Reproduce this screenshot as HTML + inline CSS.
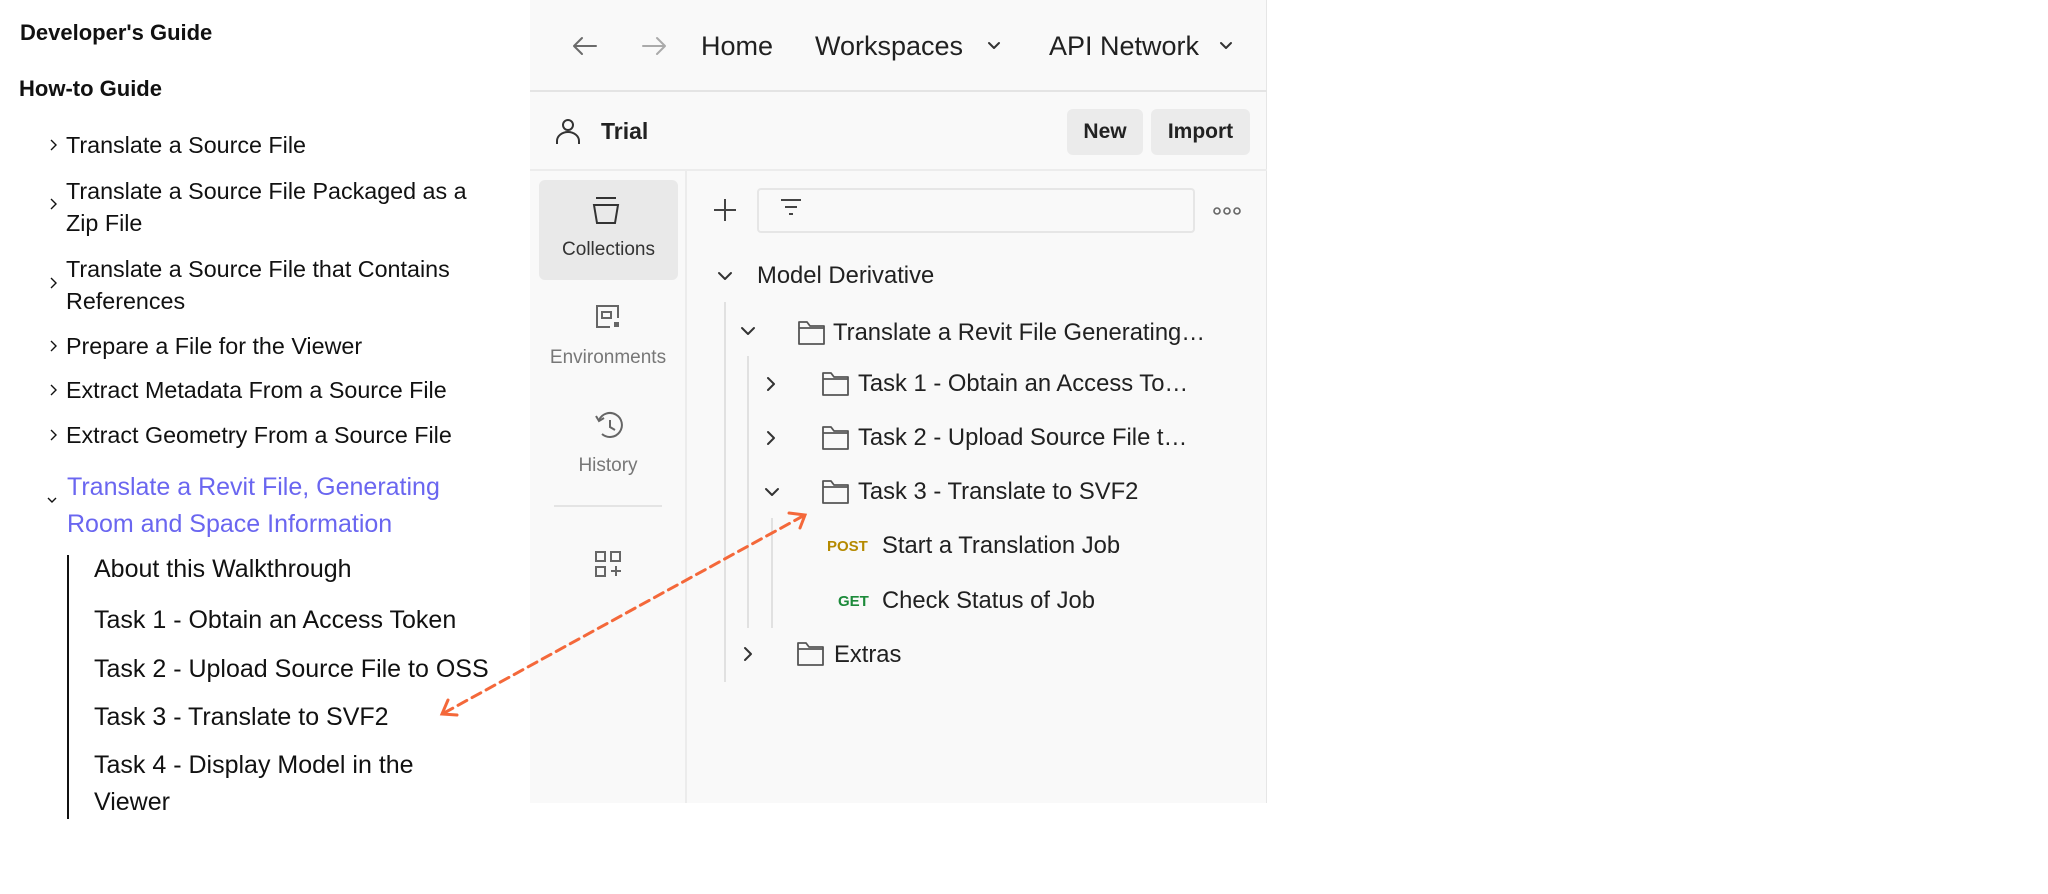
<!DOCTYPE html>
<html><head><meta charset="utf-8"><style>
*{margin:0;padding:0;box-sizing:border-box}
body{width:2048px;height:894px;background:#fff;position:relative;overflow:hidden;font-family:"Liberation Sans",sans-serif;color:#111}
.t{position:absolute;white-space:nowrap;line-height:34px;height:34px}
.l{font-size:23.3px;color:#111}
.h{font-size:22px;font-weight:bold}
.s{font-size:25px;color:#111}
.p{font-size:27px;color:#212121}
.m{font-size:23.8px;color:#212121}
svg{position:absolute;overflow:visible}
</style></head><body>

<div class="t h" style="left:20px;top:16px">Developer's Guide</div>
<div class="t h" style="left:19px;top:72px">How-to Guide</div>

<svg width="2048" height="894" style="left:0;top:0">
<g fill="none" stroke="#111" stroke-width="1.4">
<path d="M51 140l5 5-5 5"/><path d="M51 199l5 5-5 5"/><path d="M51 278l5 5-5 5"/>
<path d="M51 341l5 5-5 5"/><path d="M51 385l5 5-5 5"/><path d="M51 430l5 5-5 5"/>
<path d="M48 498l4 4 4-4"/>
</g>
<line x1="68" y1="555" x2="68" y2="819" stroke="#111" stroke-width="2"/>
</svg>

<div class="t l" style="left:66px;top:128px">Translate a Source File</div>
<div class="t l" style="left:66px;top:174px">Translate a Source File Packaged as a</div>
<div class="t l" style="left:66px;top:206px">Zip File</div>
<div class="t l" style="left:66px;top:252px">Translate a Source File that Contains</div>
<div class="t l" style="left:66px;top:284px">References</div>
<div class="t l" style="left:66px;top:329px">Prepare a File for the Viewer</div>
<div class="t l" style="left:66px;top:373px">Extract Metadata From a Source File</div>
<div class="t l" style="left:66px;top:418px">Extract Geometry From a Source File</div>
<div class="t s" style="left:67px;top:470px;color:#6a66f0">Translate a Revit File, Generating</div>
<div class="t s" style="left:67px;top:507px;color:#6a66f0">Room and Space Information</div>
<div class="t s" style="left:94px;top:552px">About this Walkthrough</div>
<div class="t s" style="left:94px;top:603px">Task 1 - Obtain an Access Token</div>
<div class="t s" style="left:94px;top:652px">Task 2 - Upload Source File to OSS</div>
<div class="t s" style="left:94px;top:700px">Task 3 - Translate to SVF2</div>
<div class="t s" style="left:94px;top:748px">Task 4 - Display Model in the</div>
<div class="t s" style="left:94px;top:785px">Viewer</div>

<!-- panel -->
<div style="position:absolute;left:530px;top:0;width:737px;height:803px;background:#f9f9f9;border-right:1px solid #e6e6e6"></div>
<div style="position:absolute;left:530px;top:90px;width:737px;height:2px;background:#e4e4e4"></div>
<div style="position:absolute;left:530px;top:169px;width:737px;height:2px;background:#ececec"></div>
<div style="position:absolute;left:685px;top:171px;width:2px;height:632px;background:#ececec"></div>

<div class="t p" style="left:701px;top:29px">Home</div>
<div class="t p" style="left:815px;top:29px">Workspaces</div>
<div class="t p" style="left:1049px;top:29px">API Network</div>
<svg style="left:0;top:0" width="2048" height="894">
<g fill="none" stroke="#6b6b6b" stroke-width="2" stroke-linecap="round" stroke-linejoin="round">
<path d="M596 46h-22M582 38l-8 8 8 8"/>
</g>
<g fill="none" stroke="#aaa" stroke-width="2" stroke-linecap="round" stroke-linejoin="round">
<path d="M643 46h22M657 38l8 8-8 8"/>
</g>
<g fill="none" stroke="#333" stroke-width="2" stroke-linecap="round" stroke-linejoin="round">
<path d="M989 43l5 5 5-5"/><path d="M1221 43l5 5 5-5"/>
</g>
<g fill="none" stroke="#333" stroke-width="2">
<circle cx="568" cy="125" r="5"/><path d="M557 144v-3a11 9 0 0 1 22 0v3"/>
</g>
</svg>
<div class="t" style="left:601px;top:114px;font-size:23px;font-weight:bold;color:#222">Trial</div>
<div style="position:absolute;left:1067px;top:109px;width:76px;height:46px;background:#ebebeb;border-radius:6px;font-size:21px;font-weight:bold;line-height:46px;text-align:center;color:#222">New</div>
<div style="position:absolute;left:1151px;top:109px;width:99px;height:46px;background:#ebebeb;border-radius:6px;font-size:21px;font-weight:bold;line-height:46px;text-align:center;color:#222">Import</div>

<!-- sidebar -->
<div style="position:absolute;left:539px;top:180px;width:139px;height:100px;background:#e9e9e9;border-radius:6px"></div>
<div class="t" style="left:539px;width:139px;text-align:center;top:233px;font-size:19px;color:#333">Collections</div>
<div class="t" style="left:530px;width:156px;text-align:center;top:341px;font-size:19px;color:#777">Environments</div>
<div class="t" style="left:530px;width:156px;text-align:center;top:449px;font-size:19px;color:#777">History</div>
<div style="position:absolute;left:554px;top:505px;width:108px;height:2px;background:#e4e4e4"></div>

<svg style="left:0;top:0" width="2048" height="894">
<g fill="none" stroke="#333" stroke-width="2">
<path d="M596 198h20M594 205h24l-3 18h-18z"/>
</g>
<g fill="none" stroke="#666" stroke-width="2">
<path d="M618 318v-12h-21v21h13"/>
<rect x="602" y="312" width="9" height="6"/>
</g>
<rect x="614" y="322" width="5" height="5" fill="#666"/>
<g fill="none" stroke="#666" stroke-width="2">
<path d="M599 420a12 12 0 1 1 3 14"/><path d="M596 416l3 5 5-3"/><path d="M610 420v7l5 3"/>
<rect x="596" y="552" width="9" height="9"/><rect x="611" y="552" width="9" height="9"/><rect x="596" y="567" width="9" height="9"/>
<path d="M611 571h10M616 566v10"/>
</g>
<g fill="none" stroke="#444" stroke-width="2">
<path d="M725 199v22M714 210h22"/>
<path d="M781 200h20M785 207h12M789 214h4"/>
</g>
<g fill="none" stroke="#666" stroke-width="1.6">
<circle cx="1217" cy="211" r="3"/><circle cx="1227" cy="211" r="3"/><circle cx="1237" cy="211" r="3"/>
</g>
<g fill="none" stroke="#333" stroke-width="2" stroke-linecap="round" stroke-linejoin="round">
<path d="M719 273l6 6 6-6"/>
<path d="M742 328l6 6 6-6"/>
<path d="M768 378l6 6-6 6"/>
<path d="M768 432l6 6-6 6"/>
<path d="M766 489l6 6 6-6"/>
<path d="M745 648l6 6-6 6"/>
</g>
<g stroke="#e1e1e1" stroke-width="2">
<line x1="725" y1="302" x2="725" y2="682"/>
<line x1="748" y1="356" x2="748" y2="628"/>
<line x1="772" y1="518" x2="772" y2="628"/>
</g>
<g fill="none" stroke="#555" stroke-width="1.8" stroke-linejoin="round">
<path d="M799 322h8l3 4h14v18h-25zM799 328h25"/>
<path d="M823 373h8l3 4h14v18h-25zM823 379h25"/>
<path d="M823 427h8l3 4h14v18h-25zM823 433h25"/>
<path d="M823 481h8l3 4h14v18h-25zM823 487h25"/>
<path d="M798 643h8l3 4h14v18h-25zM798 649h25"/>
</g>
</svg>
<div style="position:absolute;left:757px;top:188px;width:438px;height:45px;border:2px solid #e6e6e6;border-radius:4px"></div>

<div class="t m" style="left:757px;top:259px">Model Derivative</div>
<div class="t m" style="left:833px;top:316px">Translate a Revit File Generating…</div>
<div class="t m" style="left:858px;top:367px">Task 1 - Obtain an Access To…</div>
<div class="t m" style="left:858px;top:421px">Task 2 - Upload Source File t…</div>
<div class="t m" style="left:858px;top:475px">Task 3 - Translate to SVF2</div>
<div class="t" style="left:827px;top:530px;font-size:15px;font-weight:bold;color:#b58a00">POST</div>
<div class="t m" style="left:882px;top:529px">Start a Translation Job</div>
<div class="t" style="left:838px;top:585px;font-size:15px;font-weight:bold;color:#1c8a3a">GET</div>
<div class="t m" style="left:882px;top:584px">Check Status of Job</div>
<div class="t m" style="left:834px;top:638px">Extras</div>

<svg style="left:0;top:0" width="2048" height="894">
<g stroke="#f4683a" stroke-width="3" fill="none" stroke-linecap="round">
<line x1="444" y1="713" x2="803" y2="516" stroke-dasharray="10 6"/>
<path d="M448 700l-6 14 15 1"/>
<path d="M789 513l16 2-5 13"/>
</g>
</svg>
</body></html>
